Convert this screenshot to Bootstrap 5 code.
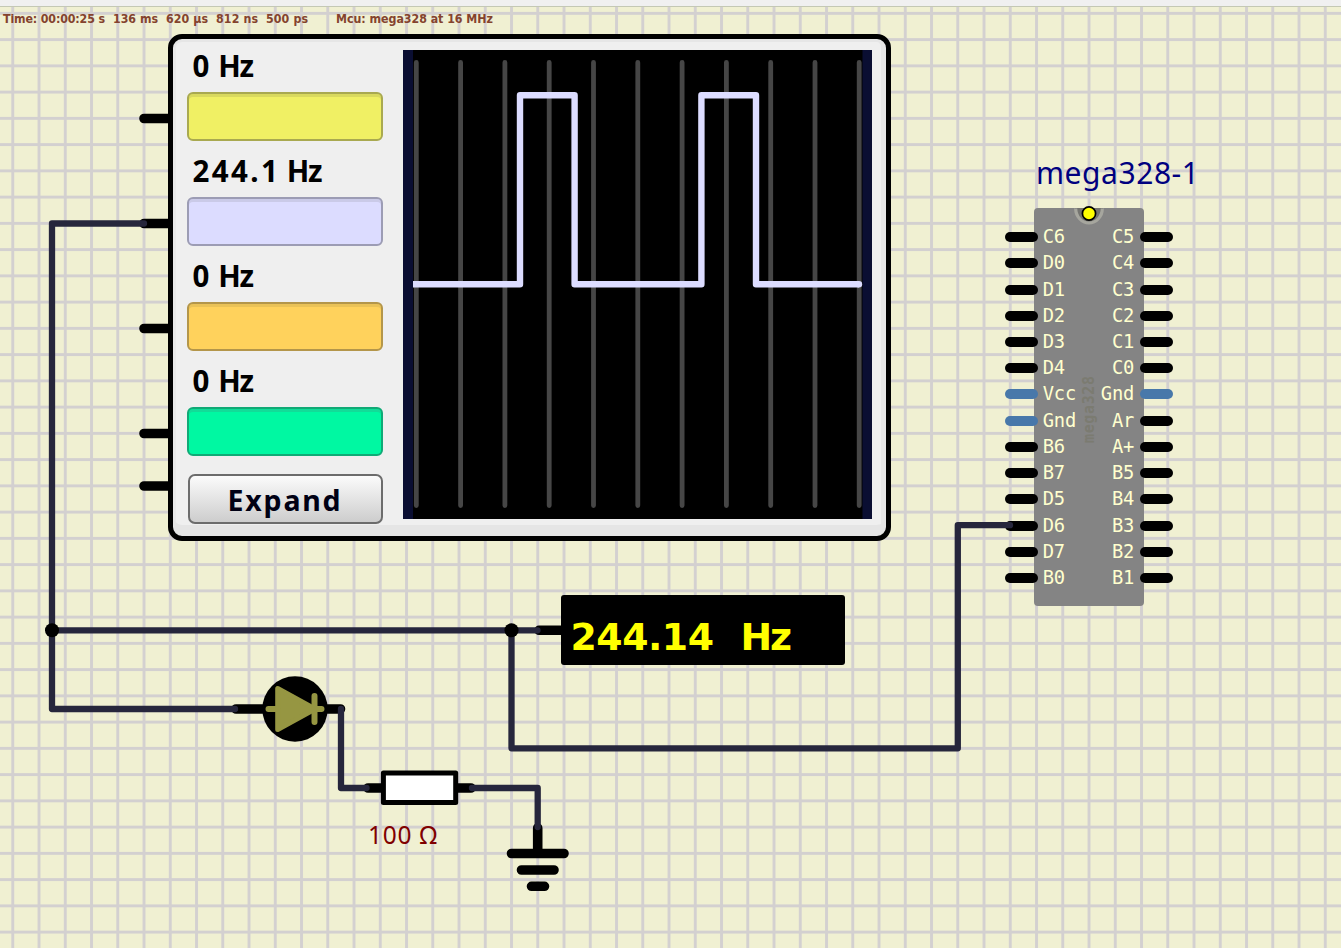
<!DOCTYPE html>
<html lang="en">
<head>
<meta charset="utf-8">
<title>Circuit simulation</title>
<link href="https://cdn.jsdelivr.net/npm/bootstrap@5.3.0/dist/css/bootstrap.min.css" rel="stylesheet">
<style>
body{width:1341px;height:948px;background:#f0f0d2;font-family:"Noto Sans",sans-serif;color:#000}
.topstrip{height:7px;background:#f0f0f0;border-bottom:1px solid #c4c8b4}
.board{height:941px}
.schematic{left:0;top:-7px;width:1341px;height:948px}
.schematic text{white-space:pre}
.scope{left:168px;top:27px;width:723px;height:506.5px;border:5px solid #000;border-radius:14px;background:#efefef;box-shadow:inset 0 -11px #e5e5e5,inset 0 3px #e6e6e6,inset 3px 0 #e8e8e8,inset -5px 0 #e6e6e6;padding:11px 14px 0 14px}
.channels{width:196px;margin-top:-1px}
.channel{height:105px}
.reading{height:43px;line-height:34px;font-size:29.5px;font-weight:700;padding-left:5.5px}
.reading span{letter-spacing:2.4px;word-spacing:-3.5px}
.reading b{font-weight:700;letter-spacing:-1.5px}
.swatch{height:49px;border:2px solid #0000;border-radius:6px}
.s1{background:#f0f064;border-color:#a9a950;box-shadow:inset 0 3px #d9d95e}
.s2{background:#dcdcff;border-color:#9c9cb4;box-shadow:inset 0 3px #cacae8}
.s3{background:#ffd25c;border-color:#b4964a;box-shadow:inset 0 3px #eac257}
.s4{background:#00f8a2;border-color:#10aa76;box-shadow:inset 0 3px #12dc98}
.expand{width:195px;height:50px;margin-top:5px;padding:0;border:2px solid #6c6c6c;border-radius:7px;background:linear-gradient(#fbfbfb,#cdcdcd);color:#000014;font-size:28.5px;font-weight:700;line-height:49px;letter-spacing:1.8px}
.screen{width:469px;height:469px}
.chip{left:1034px;top:201px;width:110px;height:398px;border-radius:4px;background:#848484;padding-top:16px}
.pinrow{height:26.23px;color:#ffffce;font:18.8px/26px "DejaVu Sans Mono",monospace;margin:0 -29px}
.lead-pin{width:33px;height:10px;border-radius:5px;background:#000;flex:none}
.power{background:#4878aa}
.pinname{width:50px;white-space:nowrap;letter-spacing:-.1px}
.pinname.text-end{padding-right:5px}
.pinname.ps-1{padding-left:4px}
.meter{left:561px;top:588px;width:284px;height:70px;border-radius:3px;background:#000}
</style>
<script src="https://cdn.jsdelivr.net/npm/bootstrap@5.3.0/dist/js/bootstrap.bundle.min.js"></script>
</head>
<body class="overflow-hidden m-0">
<header class="topstrip"></header>
<main class="board position-relative">
<svg class="schematic position-absolute" viewBox="0 0 1341 948">
  <defs><pattern id="grid" x="11.3" y="11.9" width="26.25" height="26.25" patternUnits="userSpaceOnUse"><path d="M0 1.5H26.25M1.5 0V26.25" stroke="#d3d0d0" stroke-width="2.9"/></pattern></defs>
  <rect y="7" width="1341" height="941" fill="url(#grid)"/>
  <g stroke="#000" stroke-width="9.6" stroke-linecap="round">
    <path d="M144 118.5h30M144 223.500h30M144 328.500h30M144 433.500h30M144 486h30M539 630.300h28M236 709h30M322 709h18.500M368 788h15M456 788h15M537.700 828v22M511.500 853.500h52.500M521.500 870h32.500M531.500 886.300h13"/>
  </g>
</svg>

<section class="scope position-absolute d-flex justify-content-between">
  <div class="channels d-flex flex-column">
    <div class="channel"><div class="reading"><span>0 </span><b>Hz</b></div><div class="swatch s1"></div></div>
    <div class="channel"><div class="reading"><span>244.1 </span><b>Hz</b></div><div class="swatch s2"></div></div>
    <div class="channel"><div class="reading"><span>0 </span><b>Hz</b></div><div class="swatch s3"></div></div>
    <div class="channel"><div class="reading"><span>0 </span><b>Hz</b></div><div class="swatch s4"></div></div>
    <button class="btn expand mx-auto" type="button">Expand</button>
  </div>
  <svg class="screen flex-shrink-0" viewBox="403 50 469 469">
    <path fill="#000" d="M403 50h469v469H403z"/>
    <path fill="#0a0e32" d="M403 50h10v469h-10zM862.500 50h9.500v469h-9.500z"/>
    <path stroke="#464646" stroke-width="4.800" stroke-linecap="round" d="M416.300 62.500v443M460.600 62.500v443M504.900 62.500v443M549.200 62.500v443M593.500 62.500v443M637.800 62.500v443M682.100 62.500v443M726.400 62.500v443M770.700 62.500v443M815 62.500v443M859.200 62.500v443"/>
    <path fill="none" stroke="#dcdcff" stroke-width="6.400" stroke-linejoin="round" d="M413 284.300H520V95.300H574.600V284.300H701.400V95.300H756V284.300H859"/>
    <circle cx="859" cy="284.300" r="3.200" fill="#dcdcff"/>
  </svg>
</section>

<section class="meter position-absolute"></section>

<section class="chip position-absolute" id="chip"></section>

<svg class="schematic position-absolute pe-none" viewBox="0 0 1341 948">
  <g fill="none" stroke="#26263c" stroke-width="6.300" stroke-linecap="round" stroke-linejoin="round">
    <path d="M144 223.500H52V709H235M52 630.300H537.500M511.500 630.300V748.300H957.800V525.200H1010M341 709V788H366.500M472 788H537.700V827"/>
  </g>
  <circle cx="52" cy="630.300" r="7"/><circle cx="511.500" cy="630.300" r="7"/>
  <circle cx="295" cy="709" r="32.700"/>
  <g stroke="#969642" stroke-linecap="round" stroke-linejoin="round" fill="#969642">
    <path stroke-width="6" d="M268.500 709H321.500M314.500 696V722"/>
    <path stroke-width="5" d="M277.700 688.500V729.500L315 709Z"/>
  </g>
  <rect x="383.400" y="773" width="72.300" height="29.500" fill="#fff" stroke="#000" stroke-width="5" stroke-linejoin="round"/>
  <path d="M1075 208a14 15 0 0 0 28 0z" fill="#747470"/>
  <path d="M1075.700 208.500a13.300 14.500 0 0 0 26.600 0" fill="none" stroke="#a6a69e" stroke-width="3.200"/>
  <circle cx="1089" cy="213.500" r="6.600" fill="#ff0" stroke="#000" stroke-width="1.700"/>
  <text transform="translate(1094 443) rotate(-90)" font-family="DejaVu Sans Mono,monospace" font-weight="700" font-size="15" fill="#7b7b71" textLength="67">mega328</text>
  <g font-family="DejaVu Sans Condensed,DejaVu Sans,sans-serif" font-weight="700" font-size="12.300" fill="#84432e">
    <text x="3" y="23" textLength="102">Time: 00:00:25 s</text>
    <text x="113" y="23" textLength="45">136 ms</text>
    <text x="166" y="23" textLength="42">620 µs</text>
    <text x="216" y="23" textLength="42">812 ns</text>
    <text x="266" y="23" textLength="42">500 ps</text>
    <text x="336" y="23" textLength="157">Mcu: mega328 at 16 MHz</text>
  </g>
  <text x="1036" y="183.500" font-family="Noto Sans,sans-serif" font-size="30" fill="#000080" textLength="163">mega328-1</text>
  <text x="368" y="843.700" font-family="Noto Sans,sans-serif" font-size="24.500" fill="#800000" textLength="69">100 Ω</text>
  <g font-family="DejaVu Sans,sans-serif" font-weight="700" font-size="37.800" fill="#ff0">
    <text x="570.500" y="650" textLength="143.500">244.14</text>
    <text x="740.500" y="650" textLength="51.500">Hz</text>
  </g>
</svg>
</main>
<script>
const left = ["C6","D0","D1","D2","D3","D4","Vcc","Gnd","B6","B7","D5","D6","D7","B0"];
const right = ["C5","C4","C3","C2","C1","C0","Gnd","Ar","A+","B5","B4","B3","B2","B1"];
const lead = n => `<i class="lead-pin ${n === "Vcc" || n === "Gnd" ? "power" : ""}"></i>`;
document.getElementById("chip").innerHTML = left.map((n, i) =>
  `<div class="pinrow d-flex align-items-center justify-content-between">${lead(n)}<span class="pinname ps-1">${n}</span><span class="pinname text-end">${right[i]}</span>${lead(right[i])}</div>`).join("");
</script>
</body>
</html>
